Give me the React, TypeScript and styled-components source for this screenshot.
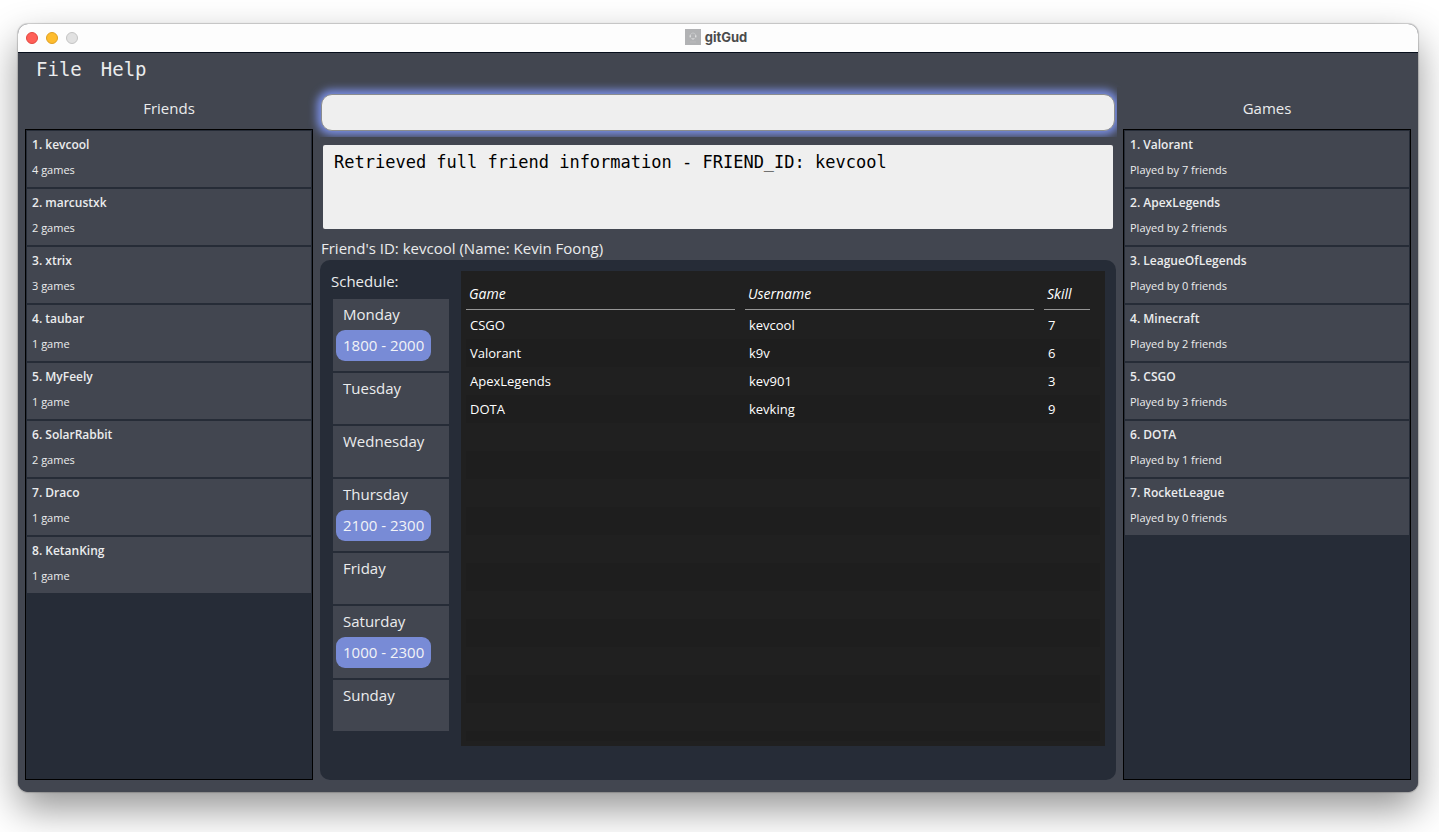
import React from "react";
import styled, { createGlobalStyle } from "styled-components";

const colors = {
  chrome: "#424650",
  panel: "#262c37",
  field: "#efefef",
  accent: "#788bd6",
  text: "#ebeced",
  table: "#202020",
  tableAlt: "#1e1e1e",
};

const GlobalStyle = createGlobalStyle`
  *, *::before, *::after { box-sizing: border-box; }
  html { background: #ffffff; }
  body {
    margin: 0;
    font-family: "Open Sans", "Noto Sans", sans-serif;
    font-size: 15px;
    line-height: 20px;
    color: ${colors.text};
  }
  ul { list-style: none; margin: 0; padding: 0; }
  h2, p { margin: 0; font-weight: 400; }
`;

const Desktop = styled.div`
  display: flex;
  min-height: 100vh;
  padding: 24px 21px 40px 18px;
  overflow: hidden;
`;

const AppWindow = styled.div`
  flex: 1;
  display: flex;
  flex-direction: column;
  min-width: 0;
  overflow: hidden;
  border-radius: 10px;
  background: ${colors.chrome};
  box-shadow: 0 0 1px 1px rgba(0, 0, 0, 0.18), 0 17px 38px rgba(0, 0, 0, 0.42);
`;

const TitleBar = styled.header`
  display: grid;
  grid-template-columns: 1fr auto 1fr;
  align-items: center;
  height: 29px;
  padding: 0 12px 0 8px;
  background: #fdfdfd;
  border-bottom: 1px solid #070f1c;
`;

const WindowControls = styled.div`
  display: flex;
  gap: 8px;
`;

const WindowControl = styled.button<{ $fill: string; $edge: string }>`
  width: 12px;
  height: 12px;
  padding: 0;
  border: 1px solid ${(p) => p.$edge};
  border-radius: 50%;
  background: ${(p) => p.$fill};
`;

const WindowTitle = styled.div`
  display: flex;
  align-items: center;
  gap: 4px;
  padding-bottom: 2px;
  font: 700 13px/16px Inter, sans-serif;
  color: #4b4b4b;
`;

const MenuBar = styled.nav`
  display: flex;
  gap: 19px;
  height: 34px;
  padding: 0 18px;
`;

const MenuButton = styled.button`
  display: block;
  height: 32px;
  padding: 0;
  border: 0;
  background: none;
  font: 19px/30px "DejaVu Sans Mono", monospace;
  color: ${colors.text};
`;

const Columns = styled.main`
  flex: 1;
  display: grid;
  grid-template-columns: 295px minmax(0, 1fr) 301px;
`;

const SideColumn = styled.section<{ $side: "left" | "right" }>`
  display: flex;
  flex-direction: column;
  padding: ${(p) => (p.$side === "left" ? "0 0 12px 7px" : "0 7px 12px 6px")};
  background: ${colors.chrome};
`;

const SideHeading = styled.h2`
  height: 42px;
  padding-top: 11px;
  font-size: 15px;
  line-height: 20px;
  text-align: center;
`;

const SideList = styled.ul`
  flex: 1;
  display: flex;
  flex-direction: column;
  gap: 2px;
  && { padding: 1px; }
  border: 1px solid #000000;
  background: ${colors.panel};
`;

const SideItem = styled.li`
  display: flex;
  flex-direction: column;
  gap: 9px;
  height: 56px;
  padding: 6px 5px;
  background: ${colors.chrome};
`;

const ItemName = styled.span`
  font-size: 12px;
  line-height: 16px;
  font-weight: 600;
`;

const ItemDetail = styled.span`
  font-size: 11px;
  line-height: 16px;
`;

const CenterColumn = styled.section`
  display: flex;
  flex-direction: column;
  padding: 0 0 12px 7px;
  min-width: 0;
`;

const CommandRow = styled.div`
  display: flex;
  height: 50px;
  padding: 7px 2px 6px 1px;
`;

const CommandInput = styled.input`
  width: 100%;
  height: 37px;
  padding: 0 12px;
  border: 1px solid #8a8c8e;
  border-radius: 11px;
  outline: 0;
  background: ${colors.field};
  box-shadow: 0 0 8px 4px #7b90e6;
  font: 17px/24px "DejaVu Sans Mono", monospace;
  color: #000000;
`;

const Details = styled.div`
  flex: 1;
  display: flex;
  flex-direction: column;
  padding: 8px 1px 0 0;
  background: ${colors.chrome};
`;

const ResultDisplay = styled.textarea`
  display: block;
  height: 84px;
  margin: 0 3px;
  padding: 5px 11px;
  border: 0;
  border-radius: 2px;
  outline: 0;
  resize: none;
  background: ${colors.field};
  font: 17px/24px "DejaVu Sans Mono", monospace;
  color: #000000;
`;

const FriendHeading = styled.h2`
  height: 31px;
  padding: 9px 1px 0;
  font-size: 15px;
  line-height: 20px;
`;

const FriendPanel = styled.div`
  flex: 1;
  display: flex;
  padding: 11px 11px 34px;
  border-radius: 10px;
  background: ${colors.panel};
`;

const Schedule = styled.section`
  width: 130px;
  padding-right: 12px;
`;

const ScheduleHeading = styled.h2`
  height: 28px;
  font-size: 15px;
  line-height: 20px;
`;

const DayList = styled.ul`
  display: flex;
  flex-direction: column;
  gap: 2px;
  && { padding-left: 2px; }
`;

const Day = styled.li`
  min-height: 51px;
  padding: 5px 3px 10px;
  background: ${colors.chrome};
`;

const DayName = styled.p`
  height: 26px;
  padding-left: 7px;
`;

const TimeSlot = styled.span`
  display: block;
  width: max-content;
  height: 31px;
  padding: 0 7px;
  border-radius: 9px;
  background: ${colors.accent};
  line-height: 31px;
  color: #f2f3f7;
`;

const TableFrame = styled.div`
  flex: 1;
  min-width: 0;
  height: 475px;
  min-height: 100%;
  padding: 5px;
  background: ${colors.table};
`;

const TableClip = styled.div`
  height: 100%;
  overflow: hidden;
`;

const GameTable = styled.table`
  width: 100%;
  table-layout: fixed;
  border-collapse: collapse;
  font-size: 13px;
  line-height: 20px;
  color: #ffffff;
`;

const GameColumn = styled.col<{ $width?: string }>`
  width: ${(p) => p.$width ?? "auto"};
`;

const HeadCell = styled.th`
  height: 35px;
  padding: 0 10px 1px 0;
  text-align: left;
  font-size: 14px;
  font-weight: 400;
  font-style: italic;
`;

const HeadLabel = styled.span`
  display: block;
  height: 34px;
  padding: 8px 3px 0;
  border-bottom: 1px solid #969696;
`;

const GameRow = styled.tr`
  height: 28px;
  &:nth-child(even) { background: ${colors.tableAlt}; }
`;

const GameCell = styled.td`
  padding: 0 4px;
`;

const friends = [
  ["kevcool", "4 games"],
  ["marcustxk", "2 games"],
  ["xtrix", "3 games"],
  ["taubar", "1 game"],
  ["MyFeely", "1 game"],
  ["SolarRabbit", "2 games"],
  ["Draco", "1 game"],
  ["KetanKing", "1 game"],
];

const games = [
  ["Valorant", "Played by 7 friends"],
  ["ApexLegends", "Played by 2 friends"],
  ["LeagueOfLegends", "Played by 0 friends"],
  ["Minecraft", "Played by 2 friends"],
  ["CSGO", "Played by 3 friends"],
  ["DOTA", "Played by 1 friend"],
  ["RocketLeague", "Played by 0 friends"],
];

const schedule: { day: string; slot?: string }[] = [
  { day: "Monday", slot: "1800 - 2000" },
  { day: "Tuesday" },
  { day: "Wednesday" },
  { day: "Thursday", slot: "2100 - 2300" },
  { day: "Friday" },
  { day: "Saturday", slot: "1000 - 2300" },
  { day: "Sunday" },
];

const accounts = [
  ["CSGO", "kevcool", "7"],
  ["Valorant", "k9v", "6"],
  ["ApexLegends", "kev901", "3"],
  ["DOTA", "kevking", "9"],
];

const emptyRows = Array.from({ length: 12 }, (_, i) => i);

function AppIcon() {
  return (
    <svg width="16" height="16" viewBox="0 0 16 16" aria-hidden="true">
      <rect width="16" height="16" fill="#b1b2b4" />
      <path
        d="M5.2 7.4C5.2 5.4 6.3 4 8 4s2.800 1.400 2.800 3.400"
        fill="none"
        stroke="#c9cacc"
        strokeWidth="0.800"
      />
      <path d="M5.200 6.400v2M10.800 6.400v2" stroke="#eeeeef" strokeWidth="1" />
      <path d="M6.600 9.600q1.400 1 2.800 0" fill="none" stroke="#e6e6e8" strokeWidth="0.900" />
      <path d="M5 13h6" stroke="#bcbdbf" strokeWidth="0.800" />
    </svg>
  );
}

function SidePanel({
  title,
  side,
  items,
}: {
  title: string;
  side: "left" | "right";
  items: string[][];
}) {
  return (
    <SideColumn $side={side}>
      <SideHeading>{title}</SideHeading>
      <SideList>
        {items.map(([name, detail], i) => (
          <SideItem key={name}>
            <ItemName>
              {i + 1}. {name}
            </ItemName>
            <ItemDetail>{detail}</ItemDetail>
          </SideItem>
        ))}
      </SideList>
    </SideColumn>
  );
}

export default function App() {
  return (
    <>
      <GlobalStyle />
      <Desktop>
        <AppWindow>
          <TitleBar>
            <WindowControls>
              <WindowControl aria-label="Close" $fill="#ff5f57" $edge="#e2463f" />
              <WindowControl aria-label="Minimize" $fill="#febc2e" $edge="#dfa023" />
              <WindowControl aria-label="Zoom" $fill="#e1e1e1" $edge="#c4c4c4" />
            </WindowControls>
            <WindowTitle>
              <AppIcon />
              gitGud
            </WindowTitle>
          </TitleBar>
          <MenuBar>
            <MenuButton>File</MenuButton>
            <MenuButton>Help</MenuButton>
          </MenuBar>
          <Columns>
            <SidePanel title="Friends" side="left" items={friends} />
            <CenterColumn>
              <CommandRow>
                <CommandInput type="text" aria-label="Command" />
              </CommandRow>
              <Details>
                <ResultDisplay
                  readOnly
                  spellCheck={false}
                  aria-label="Result"
                  value="Retrieved full friend information - FRIEND_ID: kevcool"
                />
                <FriendHeading>Friend's ID: kevcool (Name: Kevin Foong)</FriendHeading>
                <FriendPanel>
                  <Schedule>
                    <ScheduleHeading>Schedule:</ScheduleHeading>
                    <DayList>
                      {schedule.map(({ day, slot }) => (
                        <Day key={day}>
                          <DayName>{day}</DayName>
                          {slot && <TimeSlot>{slot}</TimeSlot>}
                        </Day>
                      ))}
                    </DayList>
                  </Schedule>
                  <TableFrame>
                    <TableClip>
                      <GameTable>
                        <colgroup>
                          <GameColumn $width="44%" />
                          <GameColumn />
                          <GameColumn $width="56px" />
                        </colgroup>
                        <thead>
                          <tr>
                            <HeadCell scope="col">
                              <HeadLabel>Game</HeadLabel>
                            </HeadCell>
                            <HeadCell scope="col">
                              <HeadLabel>Username</HeadLabel>
                            </HeadCell>
                            <HeadCell scope="col">
                              <HeadLabel>Skill</HeadLabel>
                            </HeadCell>
                          </tr>
                        </thead>
                        <tbody>
                          {accounts.map(([game, username, skill]) => (
                            <GameRow key={game}>
                              <GameCell>{game}</GameCell>
                              <GameCell>{username}</GameCell>
                              <GameCell>{skill}</GameCell>
                            </GameRow>
                          ))}
                          {emptyRows.map((row) => (
                            <GameRow key={row}>
                              <GameCell colSpan={3} />
                            </GameRow>
                          ))}
                        </tbody>
                      </GameTable>
                    </TableClip>
                  </TableFrame>
                </FriendPanel>
              </Details>
            </CenterColumn>
            <SidePanel title="Games" side="right" items={games} />
          </Columns>
        </AppWindow>
      </Desktop>
    </>
  );
}
